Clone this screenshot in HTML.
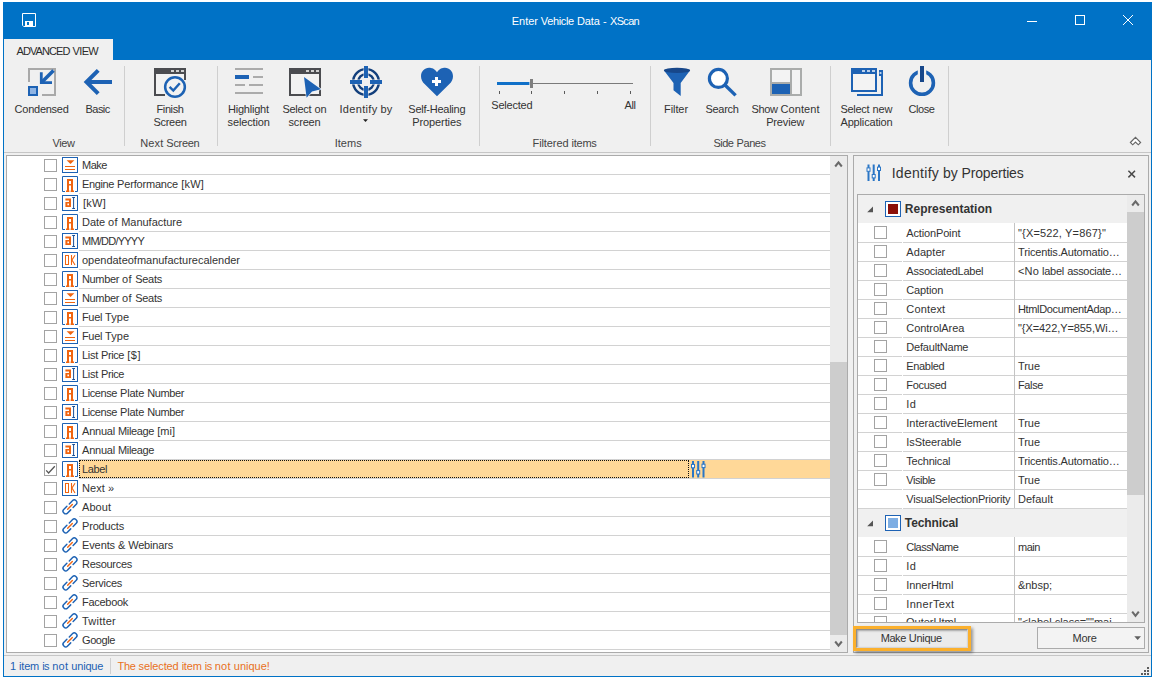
<!DOCTYPE html>
<html lang="en"><head><meta charset="utf-8"><title>Enter Vehicle Data - XScan</title>
<style>
html,body{margin:0;padding:0;background:#fff}
body{width:1154px;height:680px;overflow:hidden;position:relative;font:11px/13px "Liberation Sans",sans-serif;color:#333}
#app div,#app svg,#app span.a{position:absolute}
#app{position:absolute;left:0;top:0;width:1154px;height:680px;overflow:hidden}
.t{white-space:pre;font:11px/13px "Liberation Sans",sans-serif;color:#333;height:13px}
.t .w{display:inline-block;white-space:pre;vertical-align:baseline}
.t14{font-size:14px;line-height:16px;height:16px}
.t12b{font-size:12px;font-weight:bold;line-height:14px;height:14px}
.sec{left:0;top:0}
.wht{color:#fff}
.grp{color:#444}
.cb{box-sizing:border-box;width:13px;height:13px;border:1px solid #a3a3a3;background:#fff}
.sep{background:#d2d2d2;height:1px}
.vsep{background:#cfcfcf;width:1px}
svg{overflow:visible;display:block}
</style></head><body><div id="app">
<div class="window" style="left:3px;top:2px;width:1149px;height:675px;background:#f0f0f0;box-sizing:border-box;border:1px solid #0072c6;border-top:0"></div>
<div class="sec" id="titlebar">
<div class="titlebar" style="left:3px;top:2px;width:1149px;height:58px;background:#0072c6"></div>
<svg class="ic" style="left:22px;top:13px" width="14" height="14" viewBox="22 13 14 14"><path d="M22.5 13.5H35.5V26.5H23.7L22.5 25.3Z" fill="none" stroke="#fff" stroke-width="1"/><rect x="25" y="21" width="8" height="6" fill="#fff"/><rect x="27" y="22" width="2" height="3" fill="#0072c6"/></svg>
<div class="t wht" style="left:511.8px;top:15px"><span class="w" style="width:26px;letter-spacing:-0.059px">Enter</span> <span class="w" style="width:33px;letter-spacing:-0.355px">Vehicle</span> <span class="w" style="width:23px;letter-spacing:-0.062px">Data</span> <span class="w" style="width:4px">-</span> <span class="w" style="width:29px;letter-spacing:-0.684px">XScan</span></div>
<svg class="ic" style="left:1020px;top:10px" width="120" height="20" viewBox="1020 10 120 20"><rect x="1027" y="21" width="10" height="1" fill="#fff"/><rect x="1075.5" y="15.5" width="9" height="9" fill="none" stroke="#fff"/><path d="M1123 15L1133 25M1133 15L1123 25" stroke="#fff" stroke-width="1" fill="none"/></svg>
<div class="tab" style="left:4px;top:39px;width:109px;height:21px;background:#f0f0f0"></div>
<div class="t" style="left:16.5px;top:45px;color:#2b2b2b"><span class="w" style="width:53px;letter-spacing:-0.914px">ADVANCED</span> <span class="w" style="width:25.5px;letter-spacing:-0.656px">VIEW</span></div>
</div><div class="sec" id="ribbon">
<div class="ribbon-edge" style="left:4px;top:152px;width:1147px;height:1px;background:#c6c6c6"></div>
<div class="vsep" style="left:124px;top:66px;width:1px;height:80px;"></div>
<div class="vsep" style="left:217px;top:66px;width:1px;height:80px;"></div>
<div class="vsep" style="left:479px;top:66px;width:1px;height:80px;"></div>
<div class="vsep" style="left:650px;top:66px;width:1px;height:80px;"></div>
<div class="vsep" style="left:830px;top:66px;width:1px;height:80px;"></div>
<div class="vsep" style="left:948px;top:66px;width:1px;height:80px;"></div>
<div class="t grp" style="left:52.5px;top:137px"><span class="w" style="width:22px;letter-spacing:-0.414px">View</span></div>
<div class="t grp" style="left:140.3px;top:137px"><span class="w" style="width:23px;letter-spacing:0.094px">Next</span> <span class="w" style="width:33px;letter-spacing:-0.310px">Screen</span></div>
<div class="t grp" style="left:334.7px;top:137px"><span class="w" style="width:27px;letter-spacing:0.019px">Items</span></div>
<div class="t grp" style="left:532.5px;top:137px"><span class="w" style="width:36px;letter-spacing:-0.086px">Filtered</span> <span class="w" style="width:25px;letter-spacing:-0.256px">items</span></div>
<div class="t grp" style="left:713.5px;top:137px"><span class="w" style="width:20px;letter-spacing:-0.508px">Side</span> <span class="w" style="width:29px;letter-spacing:-0.441px">Panes</span></div>
<svg class="ic" style="left:26px;top:66px" width="32" height="32" viewBox="26 66 32 32"><path d="M29 82V69H55V95H42" fill="none" stroke="#a9a9a9" stroke-width="2"/><rect x="29" y="87" width="8" height="8" fill="#8fb4e3" stroke="#1d62b4" stroke-width="2"/><path d="M53.5 70.5L42 82" stroke="#1d62b4" stroke-width="3.6" fill="none"/><path d="M41.3 72.3V82.6H52" stroke="#1d62b4" stroke-width="2.8" fill="none"/></svg>
<div class="t" style="left:14.6px;top:103px"><span class="w" style="width:54px;letter-spacing:-0.253px">Condensed</span></div>
<svg class="ic" style="left:82px;top:66px" width="32" height="32" viewBox="82 66 32 32"><path d="M112 82H87" stroke="#1d62b4" stroke-width="4" fill="none"/><path d="M98.2 70.3L86.5 82L98.2 93.7" stroke="#1d62b4" stroke-width="4" fill="none" stroke-linejoin="miter"/></svg>
<div class="t" style="left:85.6px;top:103px"><span class="w" style="width:24px;letter-spacing:-0.581px">Basic</span></div>
<svg class="ic" style="left:152px;top:66px" width="36" height="34" viewBox="152 66 36 34"><rect x="155" y="69" width="30" height="26" fill="#f2f2f2" stroke="#4b4c50" stroke-width="2"/><rect x="154" y="68" width="32" height="6" fill="#4b4c50"/><rect x="171" y="70" width="3" height="2" fill="#d0d0d0"/><rect x="176" y="70" width="3" height="2" fill="#d0d0d0"/><rect x="181" y="70" width="3" height="2" fill="#d0d0d0"/><rect x="165" y="90" width="22" height="8" fill="#f0f0f0"/><rect x="182" y="80" width="6" height="16" fill="#f0f0f0"/><circle cx="175" cy="87" r="9.85" fill="#f2f2f2" stroke="#1d62b4" stroke-width="2.5"/><path d="M169.6 86.9L173.3 90.6L179.8 83.2" fill="none" stroke="#1d62b4" stroke-width="2.4"/></svg>
<div class="t" style="left:156.5px;top:103px"><span class="w" style="width:27px;letter-spacing:-0.391px">Finish</span></div>
<div class="t" style="left:153.5px;top:116px"><span class="w" style="width:33px;letter-spacing:-0.310px">Screen</span></div>
<svg class="ic" style="left:233px;top:66px" width="32" height="32" viewBox="233 66 32 32"><rect x="235" y="68" width="28" height="2" fill="#ababab"/><rect x="235" y="75" width="14" height="4" fill="#1d62b4"/><rect x="253" y="76" width="10" height="2" fill="#ababab"/><rect x="235" y="84" width="10" height="2" fill="#ababab"/><rect x="249" y="84" width="14" height="2" fill="#ababab"/><rect x="235" y="92" width="28" height="2" fill="#ababab"/></svg>
<div class="t" style="left:227.9px;top:103px"><span class="w" style="width:41px;letter-spacing:-0.201px">Highlight</span></div>
<div class="t" style="left:227.6px;top:116px"><span class="w" style="width:42px;letter-spacing:-0.158px">selection</span></div>
<svg class="ic" style="left:287px;top:66px" width="36" height="34" viewBox="287 66 36 34"><rect x="290" y="69" width="30" height="26" fill="#f2f2f2" stroke="#4b4c50" stroke-width="2"/><rect x="289" y="68" width="32" height="6" fill="#4b4c50"/><rect x="306" y="70" width="3" height="2" fill="#d0d0d0"/><rect x="311" y="70" width="3" height="2" fill="#d0d0d0"/><rect x="316" y="70" width="3" height="2" fill="#d0d0d0"/><path d="M304 77L321 89.2L312 91.6L306.6 97.8Z" fill="#1d62b4" stroke="#f4f4f4" stroke-width="1.2" paint-order="stroke"/></svg>
<div class="t" style="left:282.4px;top:103px"><span class="w" style="width:29px;letter-spacing:-0.263px">Select</span> <span class="w" style="width:12px;letter-spacing:-0.125px">on</span></div>
<div class="t" style="left:288.5px;top:116px"><span class="w" style="width:32px;letter-spacing:-0.172px">screen</span></div>
<svg class="ic" style="left:350px;top:66px" width="32" height="32" viewBox="350 66 32 32"><circle cx="366" cy="82" r="12.9" fill="none" stroke="#123f7c" stroke-width="2.4"/><circle cx="366" cy="82" r="7.9" fill="none" stroke="#123f7c" stroke-width="2.4"/><g fill="#1d62b4" stroke="#f0f0f0" stroke-width="0.8" paint-order="stroke"><rect x="364" y="66" width="4" height="12"/><rect x="364" y="86" width="4" height="12"/><rect x="350" y="80" width="12" height="4"/><rect x="370" y="80" width="12" height="4"/></g></svg>
<div class="t" style="left:339.5px;top:103px"><span class="w" style="width:38px;letter-spacing:0.316px">Identify</span> <span class="w" style="width:12px;letter-spacing:0.188px">by</span></div>
<svg class="ic" style="left:362px;top:118px" width="8" height="5" viewBox="362 118 8 5"><path d="M363 119.3H368L365.5 122Z" fill="#222"/></svg>
<svg class="ic" style="left:421px;top:66px" width="32" height="32" viewBox="421 66 32 32"><path d="M437 72.3C434.5 68.6 431.6 67.8 429 67.8C424.5 67.8 421 71.5 421 76.2C421 79.6 422.4 81.8 424.6 84L437 96.2L449.4 84C451.6 81.8 453 79.6 453 76.2C453 71.5 449.5 67.8 445 67.8C442.4 67.8 439.5 68.6 437 72.3Z" fill="#1d62b4"/><rect x="435" y="77" width="3" height="9" fill="#fff"/><rect x="432" y="80" width="9" height="3" fill="#fff"/></svg>
<div class="t" style="left:408.3px;top:103px"><span class="w" style="width:57px;letter-spacing:-0.243px">Self-Healing</span></div>
<div class="t" style="left:412.3px;top:116px"><span class="w" style="width:49px;letter-spacing:-0.114px">Properties</span></div>
<svg class="ic" style="left:490px;top:76px" width="150" height="20" viewBox="490 76 150 20"><rect x="497" y="82" width="32.4" height="3" fill="#1070c8"/><rect x="533" y="83" width="100" height="1" fill="#7a7a7a"/><rect x="530" y="79" width="3" height="9" fill="#7f7f7f"/><rect x="499" y="91" width="1" height="3" fill="#5a5a5a"/><rect x="531" y="91" width="1" height="3" fill="#5a5a5a"/><rect x="564" y="91" width="1" height="3" fill="#5a5a5a"/><rect x="597" y="91" width="1" height="3" fill="#5a5a5a"/><rect x="630" y="91" width="1" height="3" fill="#5a5a5a"/></svg>
<div class="t" style="left:491.3px;top:99px"><span class="w" style="width:41px;letter-spacing:-0.227px">Selected</span></div>
<div class="t" style="left:624.5px;top:99px"><span class="w" style="width:11px;letter-spacing:-0.411px">All</span></div>
<svg class="ic" style="left:662px;top:66px" width="30" height="32" viewBox="662 66 30 32"><path d="M664 70.6L673.5 83V90.2L680.7 96V83L690 70.6Z" fill="#1d62b4"/><ellipse cx="677" cy="70.4" rx="13.1" ry="2.7" fill="#17478a"/></svg>
<div class="t" style="left:664px;top:103px"><span class="w" style="width:24px;letter-spacing:-0.076px">Filter</span></div>
<svg class="ic" style="left:705px;top:66px" width="34" height="32" viewBox="705 66 34 32"><path d="M725 85L735.6 95.4" stroke="#1d62b4" stroke-width="3.4" fill="none"/><circle cx="718.4" cy="78.4" r="9" fill="#fff" stroke="#1d62b4" stroke-width="3.2"/></svg>
<div class="t" style="left:705.5px;top:103px"><span class="w" style="width:33px;letter-spacing:-0.310px">Search</span></div>
<svg class="ic" style="left:770px;top:66px" width="32" height="32" viewBox="770 66 32 32"><rect x="771" y="69" width="30" height="26" fill="#f3f3f3" stroke="#aaacab" stroke-width="2"/><rect x="771" y="82" width="20" height="2" fill="#aaacab"/><rect x="790" y="69" width="2" height="26" fill="#aaacab"/><rect x="772" y="84" width="18" height="10" fill="#1d62b4"/></svg>
<div class="t" style="left:751.5px;top:103px"><span class="w" style="width:26px;letter-spacing:-0.383px">Show</span> <span class="w" style="width:39px;letter-spacing:0.067px">Content</span></div>
<div class="t" style="left:766.2px;top:116px"><span class="w" style="width:38px;letter-spacing:-0.161px">Preview</span></div>
<svg class="ic" style="left:850px;top:66px" width="34" height="32" viewBox="850 66 34 32"><path d="M879 71H882V95H857" fill="none" stroke="#1d62b4" stroke-width="2"/><rect x="879" y="70" width="4" height="6" fill="#1d62b4"/><rect x="879.6" y="72" width="1.8" height="2" fill="#b9cfea"/><rect x="852" y="69" width="24" height="22" fill="#f3f3f3" stroke="#1d62b4" stroke-width="2"/><rect x="851" y="68" width="26" height="6" fill="#1d62b4"/><rect x="862" y="70" width="3" height="2" fill="#b9cfea"/><rect x="867" y="70" width="3" height="2" fill="#b9cfea"/><rect x="872" y="70" width="3" height="2" fill="#b9cfea"/></svg>
<div class="t" style="left:840.4px;top:103px"><span class="w" style="width:29px;letter-spacing:-0.263px">Select</span> <span class="w" style="width:20px;letter-spacing:-0.062px">new</span></div>
<div class="t" style="left:840.5px;top:116px"><span class="w" style="width:52px;letter-spacing:-0.166px">Application</span></div>
<svg class="ic" style="left:906px;top:64px" width="32" height="34" viewBox="906 64 32 34"><circle cx="922" cy="82.9" r="11.4" fill="none" stroke="#1d62b4" stroke-width="3.6"/><rect x="917.8" y="66" width="8.4" height="12" fill="#f0f0f0"/><rect x="920" y="66" width="4" height="16" fill="#17478a"/></svg>
<div class="t" style="left:908.5px;top:103px"><span class="w" style="width:26px;letter-spacing:-0.425px">Close</span></div>
<svg class="ic" style="left:1128px;top:135px" width="16" height="13" viewBox="1128 135 16 13"><path d="M1130.4 142.5L1135.5 137.4L1140.6 142.5L1138.3 144.8L1135.5 142L1132.7 144.8Z" fill="#fff" stroke="#666" stroke-width="1.15" stroke-linejoin="miter"/></svg>
</div><div class="sec" id="controls">
<div class="listpanel" style="left:6px;top:155px;width:842px;height:498px;background:#fff;box-sizing:border-box;border:1px solid #ababab"></div>
<div class="sep" style="left:79px;top:174px;width:751px;height:1px;"></div>
<div class="cb" style="left:44px;top:159px"></div>
<svg class="ic" style="left:62px;top:157px" width="16" height="16" viewBox="62 157 16 16"><rect x="62.5" y="157.5" width="15" height="15" fill="#fff" stroke="#1d62b4"/><path d="M66.6 160.2H74.4L70.5 164Z" fill="#f0640f"/><rect x="65" y="166" width="10" height="1" fill="#f0640f"/><rect x="65" y="169" width="10" height="1" fill="#f0640f"/></svg>
<div class="t" style="left:82px;top:159px"><span class="w" style="width:25px;letter-spacing:-0.477px">Make</span></div>
<div class="sep" style="left:79px;top:193px;width:751px;height:1px;"></div>
<div class="cb" style="left:44px;top:178px"></div>
<svg class="ic" style="left:62px;top:176px" width="16" height="16" viewBox="62 176 16 16"><rect x="62" y="176" width="16" height="16" fill="#fff"/><path d="M65 191.5H62.5V176.5H77.5V191.5H75" fill="none" stroke="#1d62b4"/><path d="M67 179H73V190.6H74V192H70.6V190.6H71V185.6H69V190.6H69.4V192H66V190.6H67Z M69 181V184H71V181Z" fill="#f0640f" fill-rule="evenodd"/></svg>
<div class="t" style="left:82px;top:178px"><span class="w" style="width:32px;letter-spacing:-0.378px">Engine</span> <span class="w" style="width:61px;letter-spacing:-0.180px">Performance</span> <span class="w" style="width:23px;letter-spacing:0.250px">[kW]</span></div>
<div class="sep" style="left:79px;top:212px;width:751px;height:1px;"></div>
<div class="cb" style="left:44px;top:197px"></div>
<svg class="ic" style="left:62px;top:195px" width="16" height="16" viewBox="62 195 16 16"><rect x="62.5" y="195.5" width="15" height="15" fill="#fff" stroke="#1d62b4"/><path d="M65.4 198.6H71V207H65.4V202H69V200.4H65.4Z M67.4 203.6V205.2H69V203.6Z" fill="#f0640f" fill-rule="evenodd"/><path d="M72.2 197.5H75M72.2 208.5H75M73.6 197.5V208.5" stroke="#1b4f96" stroke-width="1" fill="none"/></svg>
<div class="t" style="left:83px;top:197px"><span class="w" style="width:23px;letter-spacing:0.250px">[kW]</span></div>
<div class="sep" style="left:79px;top:231px;width:751px;height:1px;"></div>
<div class="cb" style="left:44px;top:216px"></div>
<svg class="ic" style="left:62px;top:214px" width="16" height="16" viewBox="62 214 16 16"><rect x="62" y="214" width="16" height="16" fill="#fff"/><path d="M65 229.5H62.5V214.5H77.5V229.5H75" fill="none" stroke="#1d62b4"/><path d="M67 217H73V228.6H74V230H70.6V228.6H71V223.6H69V228.6H69.4V230H66V228.6H67Z M69 219V222H71V219Z" fill="#f0640f" fill-rule="evenodd"/></svg>
<div class="t" style="left:82px;top:216px"><span class="w" style="width:23px;letter-spacing:-0.062px">Date</span> <span class="w" style="width:10px;letter-spacing:0.406px">of</span> <span class="w" style="width:61px;letter-spacing:-0.014px">Manufacture</span></div>
<div class="sep" style="left:79px;top:250px;width:751px;height:1px;"></div>
<div class="cb" style="left:44px;top:235px"></div>
<svg class="ic" style="left:62px;top:233px" width="16" height="16" viewBox="62 233 16 16"><rect x="62.5" y="233.5" width="15" height="15" fill="#fff" stroke="#1d62b4"/><path d="M65.4 236.6H71V245H65.4V240H69V238.4H65.4Z M67.4 241.6V243.2H69V241.6Z" fill="#f0640f" fill-rule="evenodd"/><path d="M72.2 235.5H75M72.2 246.5H75M73.6 235.5V246.5" stroke="#1b4f96" stroke-width="1" fill="none"/></svg>
<div class="t" style="left:82px;top:235px"><span class="w" style="width:62px;letter-spacing:-0.769px">MM/DD/YYYY</span></div>
<div class="sep" style="left:79px;top:269px;width:751px;height:1px;"></div>
<div class="cb" style="left:44px;top:254px"></div>
<svg class="ic" style="left:62px;top:252px" width="16" height="16" viewBox="62 252 16 16"><rect x="62.5" y="252.5" width="15" height="15" fill="#fff" stroke="#1d62b4"/><rect x="65.5" y="255.5" width="3" height="9" fill="none" stroke="#f0640f"/><path d="M71.5 255V265M75 255.2L72 260L75 265" fill="none" stroke="#f0640f" stroke-width="1.1"/></svg>
<div class="t" style="left:82px;top:254px"><span class="w" style="width:158px;letter-spacing:-0.014px">opendateofmanufacturecalender</span></div>
<div class="sep" style="left:79px;top:288px;width:751px;height:1px;"></div>
<div class="cb" style="left:44px;top:273px"></div>
<svg class="ic" style="left:62px;top:271px" width="16" height="16" viewBox="62 271 16 16"><rect x="62" y="271" width="16" height="16" fill="#fff"/><path d="M65 286.5H62.5V271.5H77.5V286.5H75" fill="none" stroke="#1d62b4"/><path d="M67 274H73V285.6H74V287H70.6V285.6H71V280.6H69V285.6H69.4V287H66V285.6H67Z M69 276V279H71V276Z" fill="#f0640f" fill-rule="evenodd"/></svg>
<div class="t" style="left:82px;top:273px"><span class="w" style="width:37px;letter-spacing:-0.354px">Number</span> <span class="w" style="width:10px;letter-spacing:0.406px">of</span> <span class="w" style="width:27px;letter-spacing:-0.228px">Seats</span></div>
<div class="sep" style="left:79px;top:307px;width:751px;height:1px;"></div>
<div class="cb" style="left:44px;top:292px"></div>
<svg class="ic" style="left:62px;top:290px" width="16" height="16" viewBox="62 290 16 16"><rect x="62.5" y="290.5" width="15" height="15" fill="#fff" stroke="#1d62b4"/><path d="M66.6 293.2H74.4L70.5 297Z" fill="#f0640f"/><rect x="65" y="299" width="10" height="1" fill="#f0640f"/><rect x="65" y="302" width="10" height="1" fill="#f0640f"/></svg>
<div class="t" style="left:82px;top:292px"><span class="w" style="width:37px;letter-spacing:-0.354px">Number</span> <span class="w" style="width:10px;letter-spacing:0.406px">of</span> <span class="w" style="width:27px;letter-spacing:-0.228px">Seats</span></div>
<div class="sep" style="left:79px;top:326px;width:751px;height:1px;"></div>
<div class="cb" style="left:44px;top:311px"></div>
<svg class="ic" style="left:62px;top:309px" width="16" height="16" viewBox="62 309 16 16"><rect x="62" y="309" width="16" height="16" fill="#fff"/><path d="M65 324.5H62.5V309.5H77.5V324.5H75" fill="none" stroke="#1d62b4"/><path d="M67 312H73V323.6H74V325H70.6V323.6H71V318.6H69V323.6H69.4V325H66V323.6H67Z M69 314V317H71V314Z" fill="#f0640f" fill-rule="evenodd"/></svg>
<div class="t" style="left:82px;top:311px"><span class="w" style="width:20px;letter-spacing:-0.352px">Fuel</span> <span class="w" style="width:24px;letter-spacing:0.035px">Type</span></div>
<div class="sep" style="left:79px;top:345px;width:751px;height:1px;"></div>
<div class="cb" style="left:44px;top:330px"></div>
<svg class="ic" style="left:62px;top:328px" width="16" height="16" viewBox="62 328 16 16"><rect x="62.5" y="328.5" width="15" height="15" fill="#fff" stroke="#1d62b4"/><path d="M66.6 331.2H74.4L70.5 335Z" fill="#f0640f"/><rect x="65" y="337" width="10" height="1" fill="#f0640f"/><rect x="65" y="340" width="10" height="1" fill="#f0640f"/></svg>
<div class="t" style="left:82px;top:330px"><span class="w" style="width:20px;letter-spacing:-0.352px">Fuel</span> <span class="w" style="width:24px;letter-spacing:0.035px">Type</span></div>
<div class="sep" style="left:79px;top:364px;width:751px;height:1px;"></div>
<div class="cb" style="left:44px;top:349px"></div>
<svg class="ic" style="left:62px;top:347px" width="16" height="16" viewBox="62 347 16 16"><rect x="62" y="347" width="16" height="16" fill="#fff"/><path d="M65 362.5H62.5V347.5H77.5V362.5H75" fill="none" stroke="#1d62b4"/><path d="M67 350H73V361.6H74V363H70.6V361.6H71V356.6H69V361.6H69.4V363H66V361.6H67Z M69 352V355H71V352Z" fill="#f0640f" fill-rule="evenodd"/></svg>
<div class="t" style="left:82px;top:349px"><span class="w" style="width:16px;letter-spacing:-0.281px">List</span> <span class="w" style="width:23px;letter-spacing:-0.412px">Price</span> <span class="w" style="width:14px;letter-spacing:0.589px">[$]</span></div>
<div class="sep" style="left:79px;top:383px;width:751px;height:1px;"></div>
<div class="cb" style="left:44px;top:368px"></div>
<svg class="ic" style="left:62px;top:366px" width="16" height="16" viewBox="62 366 16 16"><rect x="62.5" y="366.5" width="15" height="15" fill="#fff" stroke="#1d62b4"/><path d="M65.4 369.6H71V378H65.4V373H69V371.4H65.4Z M67.4 374.6V376.2H69V374.6Z" fill="#f0640f" fill-rule="evenodd"/><path d="M72.2 368.5H75M72.2 379.5H75M73.6 368.5V379.5" stroke="#1b4f96" stroke-width="1" fill="none"/></svg>
<div class="t" style="left:82px;top:368px"><span class="w" style="width:16px;letter-spacing:-0.281px">List</span> <span class="w" style="width:23px;letter-spacing:-0.412px">Price</span></div>
<div class="sep" style="left:79px;top:402px;width:751px;height:1px;"></div>
<div class="cb" style="left:44px;top:387px"></div>
<svg class="ic" style="left:62px;top:385px" width="16" height="16" viewBox="62 385 16 16"><rect x="62" y="385" width="16" height="16" fill="#fff"/><path d="M65 400.5H62.5V385.5H77.5V400.5H75" fill="none" stroke="#1d62b4"/><path d="M67 388H73V399.6H74V401H70.6V399.6H71V394.6H69V399.6H69.4V401H66V399.6H67Z M69 390V393H71V390Z" fill="#f0640f" fill-rule="evenodd"/></svg>
<div class="t" style="left:82px;top:387px"><span class="w" style="width:35px;letter-spacing:-0.417px">License</span> <span class="w" style="width:24px;letter-spacing:-0.216px">Plate</span> <span class="w" style="width:37px;letter-spacing:-0.354px">Number</span></div>
<div class="sep" style="left:79px;top:421px;width:751px;height:1px;"></div>
<div class="cb" style="left:44px;top:406px"></div>
<svg class="ic" style="left:62px;top:404px" width="16" height="16" viewBox="62 404 16 16"><rect x="62.5" y="404.5" width="15" height="15" fill="#fff" stroke="#1d62b4"/><path d="M65.4 407.6H71V416H65.4V411H69V409.4H65.4Z M67.4 412.6V414.2H69V412.6Z" fill="#f0640f" fill-rule="evenodd"/><path d="M72.2 406.5H75M72.2 417.5H75M73.6 406.5V417.5" stroke="#1b4f96" stroke-width="1" fill="none"/></svg>
<div class="t" style="left:82px;top:406px"><span class="w" style="width:35px;letter-spacing:-0.417px">License</span> <span class="w" style="width:24px;letter-spacing:-0.216px">Plate</span> <span class="w" style="width:37px;letter-spacing:-0.354px">Number</span></div>
<div class="sep" style="left:79px;top:440px;width:751px;height:1px;"></div>
<div class="cb" style="left:44px;top:425px"></div>
<svg class="ic" style="left:62px;top:423px" width="16" height="16" viewBox="62 423 16 16"><rect x="62" y="423" width="16" height="16" fill="#fff"/><path d="M65 438.5H62.5V423.5H77.5V438.5H75" fill="none" stroke="#1d62b4"/><path d="M67 426H73V437.6H74V439H70.6V437.6H71V432.6H69V437.6H69.4V439H66V437.6H67Z M69 428V431H71V428Z" fill="#f0640f" fill-rule="evenodd"/></svg>
<div class="t" style="left:82px;top:425px"><span class="w" style="width:33px;letter-spacing:-0.211px">Annual</span> <span class="w" style="width:36px;letter-spacing:-0.362px">Mileage</span> <span class="w" style="width:18px;letter-spacing:0.066px">[mi]</span></div>
<div class="sep" style="left:79px;top:459px;width:751px;height:1px;"></div>
<div class="cb" style="left:44px;top:444px"></div>
<svg class="ic" style="left:62px;top:442px" width="16" height="16" viewBox="62 442 16 16"><rect x="62.5" y="442.5" width="15" height="15" fill="#fff" stroke="#1d62b4"/><path d="M65.4 445.6H71V454H65.4V449H69V447.4H65.4Z M67.4 450.6V452.2H69V450.6Z" fill="#f0640f" fill-rule="evenodd"/><path d="M72.2 444.5H75M72.2 455.5H75M73.6 444.5V455.5" stroke="#1b4f96" stroke-width="1" fill="none"/></svg>
<div class="t" style="left:82px;top:444px"><span class="w" style="width:33px;letter-spacing:-0.211px">Annual</span> <span class="w" style="width:36px;letter-spacing:-0.362px">Mileage</span></div>
<div class="selrow" style="left:79px;top:460px;width:751px;height:18px;background:#ffd898"></div>
<div class="focus" style="left:79px;top:460px;width:610px;height:18px;box-sizing:border-box;border:1px dotted #111"></div>
<div class="sep" style="left:79px;top:478px;width:751px;height:1px;"></div>
<div class="cb" style="left:44px;top:463px"></div>
<svg class="ic" style="left:44px;top:463px" width="13" height="13" viewBox="44 463 13 13"><path d="M46.2 470.4L48.6 473L54.8 466.2" fill="none" stroke="#555" stroke-width="1.3"/></svg>
<svg class="ic" style="left:62px;top:461px" width="16" height="16" viewBox="62 461 16 16"><rect x="62" y="461" width="16" height="16" fill="#fff"/><path d="M65 476.5H62.5V461.5H77.5V476.5H75" fill="none" stroke="#1d62b4"/><path d="M67 464H73V475.6H74V477H70.6V475.6H71V470.6H69V475.6H69.4V477H66V475.6H67Z M69 466V469H71V466Z" fill="#f0640f" fill-rule="evenodd"/></svg>
<div class="t" style="left:82px;top:463px"><span class="w" style="width:25px;letter-spacing:-0.384px">Label</span></div>
<div class="sep" style="left:79px;top:497px;width:751px;height:1px;"></div>
<div class="cb" style="left:44px;top:482px"></div>
<svg class="ic" style="left:62px;top:480px" width="16" height="16" viewBox="62 480 16 16"><rect x="62.5" y="480.5" width="15" height="15" fill="#fff" stroke="#1d62b4"/><rect x="65.5" y="483.5" width="3" height="9" fill="none" stroke="#f0640f"/><path d="M71.5 483V493M75 483.2L72 488L75 493" fill="none" stroke="#f0640f" stroke-width="1.1"/></svg>
<div class="t" style="left:82px;top:482px"><span class="w" style="width:23px;letter-spacing:0.094px">Next</span> <span class="w" style="width:6px">»</span></div>
<div class="sep" style="left:79px;top:516px;width:751px;height:1px;"></div>
<div class="cb" style="left:44px;top:501px"></div>
<svg class="ic" style="left:62px;top:499px" width="16" height="16" viewBox="62 499 16 16"><g transform="rotate(-45 70 506.9)" fill="none" stroke-linecap="round"><path d="M71.6 504.29999999999995H76.3A2.3 2.3 0 0 1 78.6 506.59999999999997V507.2A2.3 2.3 0 0 1 76.3 509.5H71.8" stroke="#1d62b4" stroke-width="1.45"/><path d="M68.4 509.5H63.7A2.3 2.3 0 0 1 61.4 507.2V506.59999999999997A2.3 2.3 0 0 1 63.7 504.29999999999995H68.2" stroke="#1d62b4" stroke-width="1.45"/><path d="M66.7 506.9H73.3" stroke="#f0640f" stroke-width="1.4"/></g></svg>
<div class="t" style="left:82px;top:501px"><span class="w" style="width:29px;letter-spacing:0.050px">About</span></div>
<div class="sep" style="left:79px;top:535px;width:751px;height:1px;"></div>
<div class="cb" style="left:44px;top:520px"></div>
<svg class="ic" style="left:62px;top:518px" width="16" height="16" viewBox="62 518 16 16"><g transform="rotate(-45 70 525.9)" fill="none" stroke-linecap="round"><path d="M71.6 523.3H76.3A2.3 2.3 0 0 1 78.6 525.6V526.1999999999999A2.3 2.3 0 0 1 76.3 528.5H71.8" stroke="#1d62b4" stroke-width="1.45"/><path d="M68.4 528.5H63.7A2.3 2.3 0 0 1 61.4 526.1999999999999V525.6A2.3 2.3 0 0 1 63.7 523.3H68.2" stroke="#1d62b4" stroke-width="1.45"/><path d="M66.7 525.9H73.3" stroke="#f0640f" stroke-width="1.4"/></g></svg>
<div class="t" style="left:82px;top:520px"><span class="w" style="width:42px;letter-spacing:-0.178px">Products</span></div>
<div class="sep" style="left:79px;top:554px;width:751px;height:1px;"></div>
<div class="cb" style="left:44px;top:539px"></div>
<svg class="ic" style="left:62px;top:537px" width="16" height="16" viewBox="62 537 16 16"><g transform="rotate(-45 70 544.9)" fill="none" stroke-linecap="round"><path d="M71.6 542.3H76.3A2.3 2.3 0 0 1 78.6 544.6V545.1999999999999A2.3 2.3 0 0 1 76.3 547.5H71.8" stroke="#1d62b4" stroke-width="1.45"/><path d="M68.4 547.5H63.7A2.3 2.3 0 0 1 61.4 545.1999999999999V544.6A2.3 2.3 0 0 1 63.7 542.3H68.2" stroke="#1d62b4" stroke-width="1.45"/><path d="M66.7 544.9H73.3" stroke="#f0640f" stroke-width="1.4"/></g></svg>
<div class="t" style="left:82px;top:539px"><span class="w" style="width:33px;letter-spacing:-0.107px">Events</span> <span class="w" style="width:7px">&amp;</span> <span class="w" style="width:45px;letter-spacing:-0.158px">Webinars</span></div>
<div class="sep" style="left:79px;top:573px;width:751px;height:1px;"></div>
<div class="cb" style="left:44px;top:558px"></div>
<svg class="ic" style="left:62px;top:556px" width="16" height="16" viewBox="62 556 16 16"><g transform="rotate(-45 70 563.9)" fill="none" stroke-linecap="round"><path d="M71.6 561.3H76.3A2.3 2.3 0 0 1 78.6 563.6V564.1999999999999A2.3 2.3 0 0 1 76.3 566.5H71.8" stroke="#1d62b4" stroke-width="1.45"/><path d="M68.4 566.5H63.7A2.3 2.3 0 0 1 61.4 564.1999999999999V563.6A2.3 2.3 0 0 1 63.7 561.3H68.2" stroke="#1d62b4" stroke-width="1.45"/><path d="M66.7 563.9H73.3" stroke="#f0640f" stroke-width="1.4"/></g></svg>
<div class="t" style="left:82px;top:558px"><span class="w" style="width:50px;letter-spacing:-0.286px">Resources</span></div>
<div class="sep" style="left:79px;top:592px;width:751px;height:1px;"></div>
<div class="cb" style="left:44px;top:577px"></div>
<svg class="ic" style="left:62px;top:575px" width="16" height="16" viewBox="62 575 16 16"><g transform="rotate(-45 70 582.9)" fill="none" stroke-linecap="round"><path d="M71.6 580.3H76.3A2.3 2.3 0 0 1 78.6 582.6V583.1999999999999A2.3 2.3 0 0 1 76.3 585.5H71.8" stroke="#1d62b4" stroke-width="1.45"/><path d="M68.4 585.5H63.7A2.3 2.3 0 0 1 61.4 583.1999999999999V582.6A2.3 2.3 0 0 1 63.7 580.3H68.2" stroke="#1d62b4" stroke-width="1.45"/><path d="M66.7 582.9H73.3" stroke="#f0640f" stroke-width="1.4"/></g></svg>
<div class="t" style="left:82px;top:577px"><span class="w" style="width:40px;letter-spacing:-0.273px">Services</span></div>
<div class="sep" style="left:79px;top:611px;width:751px;height:1px;"></div>
<div class="cb" style="left:44px;top:596px"></div>
<svg class="ic" style="left:62px;top:594px" width="16" height="16" viewBox="62 594 16 16"><g transform="rotate(-45 70 601.9)" fill="none" stroke-linecap="round"><path d="M71.6 599.3H76.3A2.3 2.3 0 0 1 78.6 601.6V602.1999999999999A2.3 2.3 0 0 1 76.3 604.5H71.8" stroke="#1d62b4" stroke-width="1.45"/><path d="M68.4 604.5H63.7A2.3 2.3 0 0 1 61.4 602.1999999999999V601.6A2.3 2.3 0 0 1 63.7 599.3H68.2" stroke="#1d62b4" stroke-width="1.45"/><path d="M66.7 601.9H73.3" stroke="#f0640f" stroke-width="1.4"/></g></svg>
<div class="t" style="left:82px;top:596px"><span class="w" style="width:46px;letter-spacing:-0.289px">Facebook</span></div>
<div class="sep" style="left:79px;top:630px;width:751px;height:1px;"></div>
<div class="cb" style="left:44px;top:615px"></div>
<svg class="ic" style="left:62px;top:613px" width="16" height="16" viewBox="62 613 16 16"><g transform="rotate(-45 70 620.9)" fill="none" stroke-linecap="round"><path d="M71.6 618.3H76.3A2.3 2.3 0 0 1 78.6 620.6V621.1999999999999A2.3 2.3 0 0 1 76.3 623.5H71.8" stroke="#1d62b4" stroke-width="1.45"/><path d="M68.4 623.5H63.7A2.3 2.3 0 0 1 61.4 621.1999999999999V620.6A2.3 2.3 0 0 1 63.7 618.3H68.2" stroke="#1d62b4" stroke-width="1.45"/><path d="M66.7 620.9H73.3" stroke="#f0640f" stroke-width="1.4"/></g></svg>
<div class="t" style="left:82px;top:615px"><span class="w" style="width:34px;letter-spacing:0.228px">Twitter</span></div>
<div class="sep" style="left:79px;top:649px;width:751px;height:1px;"></div>
<div class="cb" style="left:44px;top:634px"></div>
<svg class="ic" style="left:62px;top:632px" width="16" height="16" viewBox="62 632 16 16"><g transform="rotate(-45 70 639.9)" fill="none" stroke-linecap="round"><path d="M71.6 637.3H76.3A2.3 2.3 0 0 1 78.6 639.6V640.1999999999999A2.3 2.3 0 0 1 76.3 642.5H71.8" stroke="#1d62b4" stroke-width="1.45"/><path d="M68.4 642.5H63.7A2.3 2.3 0 0 1 61.4 640.1999999999999V639.6A2.3 2.3 0 0 1 63.7 637.3H68.2" stroke="#1d62b4" stroke-width="1.45"/><path d="M66.7 639.9H73.3" stroke="#f0640f" stroke-width="1.4"/></g></svg>
<div class="t" style="left:82px;top:634px"><span class="w" style="width:33px;letter-spacing:-0.414px">Google</span></div>
<svg class="ic" style="left:690px;top:461px" width="16" height="17" viewBox="690 461 16 17"><rect x="692.0" y="461" width="2" height="16.5" fill="#2a76c6"/><rect x="691.5" y="464.4" width="3" height="3.4" fill="#fff" stroke="#2a76c6" stroke-width="1"/><rect x="697.2" y="461" width="2" height="16.5" fill="#2a76c6"/><rect x="696.7" y="470.6" width="3" height="3.4" fill="#fff" stroke="#2a76c6" stroke-width="1"/><rect x="702.5" y="461" width="2" height="16.5" fill="#2a76c6"/><rect x="702.0" y="464.2" width="3" height="3.4" fill="#fff" stroke="#2a76c6" stroke-width="1"/></svg>
<div class="vscroll" style="left:830px;top:156px;width:17px;height:496px;background:#ebebeb"></div>
<div class="thumb" style="left:830px;top:362px;width:17px;height:273px;background:#cdcdcd"></div>
<svg class="ic" style="left:834px;top:160px" width="9" height="8" viewBox="834 160 9 8"><path d="M835.2 166.5L838.5 162.4L841.8 166.5" fill="none" stroke="#696969" stroke-width="2.05"/></svg>
<svg class="ic" style="left:834px;top:640px" width="9" height="8" viewBox="834 640 9 8"><path d="M835.2 641.5L838.5 645.6L841.8 641.5" fill="none" stroke="#696969" stroke-width="2.05"/></svg>
</div><div class="sec" id="properties">
<div class="proppanel" style="left:853px;top:155px;width:296px;height:498px;background:#f0f0f0;box-sizing:border-box;border:1px solid #ababab"></div>
<svg class="ic" style="left:865px;top:164px" width="17" height="18" viewBox="865 164 17 18"><rect x="867.5" y="164.5" width="2" height="16.5" fill="#2a76c6"/><rect x="867.0" y="167.9" width="3" height="3.4" fill="#fff" stroke="#2a76c6" stroke-width="1"/><rect x="872.7" y="164.5" width="2" height="16.5" fill="#2a76c6"/><rect x="872.2" y="174.5" width="3" height="3.4" fill="#fff" stroke="#2a76c6" stroke-width="1"/><rect x="878" y="164.5" width="2" height="16.5" fill="#2a76c6"/><rect x="877.5" y="167.1" width="3" height="3.4" fill="#fff" stroke="#2a76c6" stroke-width="1"/></svg>
<div class="t t14" style="left:891.7px;top:165px"><span class="w" style="width:47.4px;letter-spacing:0.282px">Identify</span> <span class="w" style="width:14.7px;letter-spacing:-0.048px">by</span> <span class="w" style="width:62px;letter-spacing:-0.181px">Properties</span></div>
<svg class="ic" style="left:1127px;top:169px" width="10" height="10" viewBox="1127 169 10 10"><path d="M1128.4 170.8L1135 177.4M1135 170.8L1128.4 177.4" stroke="#4a4a4a" stroke-width="1.5" fill="none"/></svg>
<div class="grid" style="left:857px;top:194px;width:288px;height:429px;background:#fff;box-sizing:border-box;border:1px solid #ababab"></div>
<div style="left:858px;top:195px;width:269px;height:28px;background:#f0f0f0"></div>
<svg class="ic" style="left:866px;top:206px" width="8" height="7" viewBox="866 206 8 7"><path d="M873 206.6V212.2H867.2Z" fill="#555"/></svg>
<svg class="ic" style="left:885px;top:201px" width="16" height="16" viewBox="885 201 16 16"><rect x="885.5" y="201.5" width="15" height="15" fill="#fff" stroke="#1d62b4"/><rect x="888" y="204" width="10" height="10" fill="#8c0f08"/></svg>
<div class="t t12b" style="left:904.8px;top:202px"><span class="w" style="width:87.3px;letter-spacing:-0.004px">Representation</span></div>
<div class="sep" style="left:858px;top:242px;width:44px;height:1px;"></div>
<div class="sep" style="left:903px;top:242px;width:224px;height:1px;"></div>
<div style="left:1014px;top:223px;width:1px;height:19px;background:#c4c4c4"></div>
<div class="cb" style="left:874px;top:226px"></div>
<div class="t" style="left:906.3px;top:227px"><span class="w" style="width:54px;letter-spacing:-0.151px">ActionPoint</span></div>
<div class="t" style="left:1018px;top:227px"><span class="w" style="width:44px;letter-spacing:0.156px">&quot;{X=522,</span> <span class="w" style="width:41px;letter-spacing:0.185px">Y=867}&quot;</span></div>
<div class="sep" style="left:858px;top:261px;width:44px;height:1px;"></div>
<div class="sep" style="left:903px;top:261px;width:224px;height:1px;"></div>
<div style="left:1014px;top:242px;width:1px;height:19px;background:#c4c4c4"></div>
<div class="cb" style="left:874px;top:245px"></div>
<div class="t" style="left:906.3px;top:246px"><span class="w" style="width:39px;letter-spacing:0.067px">Adapter</span></div>
<div class="t" style="left:1018px;top:246px"><span class="w" style="width:101.5px;letter-spacing:-0.163px">Tricentis.Automatio…</span></div>
<div class="sep" style="left:858px;top:280px;width:44px;height:1px;"></div>
<div class="sep" style="left:903px;top:280px;width:224px;height:1px;"></div>
<div style="left:1014px;top:261px;width:1px;height:19px;background:#c4c4c4"></div>
<div class="cb" style="left:874px;top:264px"></div>
<div class="t" style="left:906.3px;top:265px"><span class="w" style="width:77px;letter-spacing:-0.249px">AssociatedLabel</span></div>
<div class="t" style="left:1018px;top:265px"><span class="w" style="width:21px;letter-spacing:0.167px">&lt;No</span> <span class="w" style="width:22px;letter-spacing:-0.250px">label</span> <span class="w" style="width:54.5px;letter-spacing:-0.298px">associate…</span></div>
<div class="sep" style="left:858px;top:299px;width:44px;height:1px;"></div>
<div class="sep" style="left:903px;top:299px;width:224px;height:1px;"></div>
<div style="left:1014px;top:280px;width:1px;height:19px;background:#c4c4c4"></div>
<div class="cb" style="left:874px;top:283px"></div>
<div class="t" style="left:906.3px;top:284px"><span class="w" style="width:37px;letter-spacing:-0.132px">Caption</span></div>
<div class="sep" style="left:858px;top:318px;width:44px;height:1px;"></div>
<div class="sep" style="left:903px;top:318px;width:224px;height:1px;"></div>
<div style="left:1014px;top:299px;width:1px;height:19px;background:#c4c4c4"></div>
<div class="cb" style="left:874px;top:302px"></div>
<div class="t" style="left:906.3px;top:303px"><span class="w" style="width:39px;letter-spacing:0.154px">Context</span></div>
<div class="t" style="left:1018px;top:303px"><span class="w" style="width:103.5px;letter-spacing:-0.349px">HtmlDocumentAdap…</span></div>
<div class="sep" style="left:858px;top:337px;width:44px;height:1px;"></div>
<div class="sep" style="left:903px;top:337px;width:224px;height:1px;"></div>
<div style="left:1014px;top:318px;width:1px;height:19px;background:#c4c4c4"></div>
<div class="cb" style="left:874px;top:321px"></div>
<div class="t" style="left:906.3px;top:322px"><span class="w" style="width:58px;letter-spacing:-0.064px">ControlArea</span></div>
<div class="t" style="left:1018px;top:322px"><span class="w" style="width:100.5px;letter-spacing:-0.074px">&quot;{X=422,Y=855,Wi…</span></div>
<div class="sep" style="left:858px;top:356px;width:44px;height:1px;"></div>
<div class="sep" style="left:903px;top:356px;width:224px;height:1px;"></div>
<div style="left:1014px;top:337px;width:1px;height:19px;background:#c4c4c4"></div>
<div class="cb" style="left:874px;top:340px"></div>
<div class="t" style="left:906.3px;top:341px"><span class="w" style="width:62px;letter-spacing:-0.200px">DefaultName</span></div>
<div class="sep" style="left:858px;top:375px;width:44px;height:1px;"></div>
<div class="sep" style="left:903px;top:375px;width:224px;height:1px;"></div>
<div style="left:1014px;top:356px;width:1px;height:19px;background:#c4c4c4"></div>
<div class="cb" style="left:874px;top:359px"></div>
<div class="t" style="left:906.3px;top:360px"><span class="w" style="width:38px;letter-spacing:-0.339px">Enabled</span></div>
<div class="t" style="left:1018px;top:360px"><span class="w" style="width:22px;letter-spacing:-0.055px">True</span></div>
<div class="sep" style="left:858px;top:394px;width:44px;height:1px;"></div>
<div class="sep" style="left:903px;top:394px;width:224px;height:1px;"></div>
<div style="left:1014px;top:375px;width:1px;height:19px;background:#c4c4c4"></div>
<div class="cb" style="left:874px;top:378px"></div>
<div class="t" style="left:906.3px;top:379px"><span class="w" style="width:40px;letter-spacing:-0.315px">Focused</span></div>
<div class="t" style="left:1018px;top:379px"><span class="w" style="width:25px;letter-spacing:-0.381px">False</span></div>
<div class="sep" style="left:858px;top:413px;width:44px;height:1px;"></div>
<div class="sep" style="left:903px;top:413px;width:224px;height:1px;"></div>
<div style="left:1014px;top:394px;width:1px;height:19px;background:#c4c4c4"></div>
<div class="cb" style="left:874px;top:397px"></div>
<div class="t" style="left:906.3px;top:398px"><span class="w" style="width:10px;letter-spacing:0.406px">Id</span></div>
<div class="sep" style="left:858px;top:432px;width:44px;height:1px;"></div>
<div class="sep" style="left:903px;top:432px;width:224px;height:1px;"></div>
<div style="left:1014px;top:413px;width:1px;height:19px;background:#c4c4c4"></div>
<div class="cb" style="left:874px;top:416px"></div>
<div class="t" style="left:906.3px;top:417px"><span class="w" style="width:91px;letter-spacing:-0.006px">InteractiveElement</span></div>
<div class="t" style="left:1018px;top:417px"><span class="w" style="width:22px;letter-spacing:-0.055px">True</span></div>
<div class="sep" style="left:858px;top:451px;width:44px;height:1px;"></div>
<div class="sep" style="left:903px;top:451px;width:224px;height:1px;"></div>
<div style="left:1014px;top:432px;width:1px;height:19px;background:#c4c4c4"></div>
<div class="cb" style="left:874px;top:435px"></div>
<div class="t" style="left:906.3px;top:436px"><span class="w" style="width:55px;letter-spacing:-0.060px">IsSteerable</span></div>
<div class="t" style="left:1018px;top:436px"><span class="w" style="width:22px;letter-spacing:-0.055px">True</span></div>
<div class="sep" style="left:858px;top:470px;width:44px;height:1px;"></div>
<div class="sep" style="left:903px;top:470px;width:224px;height:1px;"></div>
<div style="left:1014px;top:451px;width:1px;height:19px;background:#c4c4c4"></div>
<div class="cb" style="left:874px;top:454px"></div>
<div class="t" style="left:906.3px;top:455px"><span class="w" style="width:44px;letter-spacing:-0.207px">Technical</span></div>
<div class="t" style="left:1018px;top:455px"><span class="w" style="width:101.5px;letter-spacing:-0.163px">Tricentis.Automatio…</span></div>
<div class="sep" style="left:858px;top:489px;width:44px;height:1px;"></div>
<div class="sep" style="left:903px;top:489px;width:224px;height:1px;"></div>
<div style="left:1014px;top:470px;width:1px;height:19px;background:#c4c4c4"></div>
<div class="cb" style="left:874px;top:473px"></div>
<div class="t" style="left:906.3px;top:474px"><span class="w" style="width:29px;letter-spacing:-0.460px">Visible</span></div>
<div class="t" style="left:1018px;top:474px"><span class="w" style="width:22px;letter-spacing:-0.055px">True</span></div>
<div class="sep" style="left:858px;top:508px;width:44px;height:1px;"></div>
<div class="sep" style="left:903px;top:508px;width:224px;height:1px;"></div>
<div style="left:1014px;top:489px;width:1px;height:19px;background:#c4c4c4"></div>
<div class="t" style="left:906.3px;top:493px"><span class="w" style="width:104px;letter-spacing:-0.228px">VisualSelectionPriority</span></div>
<div class="t" style="left:1018px;top:493px"><span class="w" style="width:35px;letter-spacing:0.020px">Default</span></div>
<div style="left:858px;top:509px;width:269px;height:28px;background:#f0f0f0"></div>
<svg class="ic" style="left:866px;top:520px" width="8" height="7" viewBox="866 520 8 7"><path d="M873 520.6V526.2H867.2Z" fill="#555"/></svg>
<svg class="ic" style="left:885px;top:515px" width="16" height="16" viewBox="885 515 16 16"><rect x="885.5" y="515.5" width="15" height="15" fill="#fff" stroke="#1d62b4"/><rect x="888" y="518" width="10" height="10" fill="#7eaee3"/></svg>
<div class="t t12b" style="left:904.8px;top:516px"><span class="w" style="width:53.5px;letter-spacing:-0.108px">Technical</span></div>
<div class="sep" style="left:858px;top:556px;width:44px;height:1px;"></div>
<div class="sep" style="left:903px;top:556px;width:224px;height:1px;"></div>
<div style="left:1014px;top:537px;width:1px;height:19px;background:#c4c4c4"></div>
<div class="cb" style="left:874px;top:540px"></div>
<div class="t" style="left:906.3px;top:541px"><span class="w" style="width:52px;letter-spacing:-0.540px">ClassName</span></div>
<div class="t" style="left:1018px;top:541px"><span class="w" style="width:22px;letter-spacing:-0.461px">main</span></div>
<div class="sep" style="left:858px;top:575px;width:44px;height:1px;"></div>
<div class="sep" style="left:903px;top:575px;width:224px;height:1px;"></div>
<div style="left:1014px;top:556px;width:1px;height:19px;background:#c4c4c4"></div>
<div class="cb" style="left:874px;top:559px"></div>
<div class="t" style="left:906.3px;top:560px"><span class="w" style="width:10px;letter-spacing:0.406px">Id</span></div>
<div class="sep" style="left:858px;top:594px;width:44px;height:1px;"></div>
<div class="sep" style="left:903px;top:594px;width:224px;height:1px;"></div>
<div style="left:1014px;top:575px;width:1px;height:19px;background:#c4c4c4"></div>
<div class="cb" style="left:874px;top:578px"></div>
<div class="t" style="left:906.3px;top:579px"><span class="w" style="width:47px;letter-spacing:-0.076px">InnerHtml</span></div>
<div class="t" style="left:1018px;top:579px"><span class="w" style="width:34px;letter-spacing:-0.042px">&amp;nbsp;</span></div>
<div class="sep" style="left:858px;top:613px;width:44px;height:1px;"></div>
<div class="sep" style="left:903px;top:613px;width:224px;height:1px;"></div>
<div style="left:1014px;top:594px;width:1px;height:19px;background:#c4c4c4"></div>
<div class="cb" style="left:874px;top:597px"></div>
<div class="t" style="left:906.3px;top:598px"><span class="w" style="width:48px;letter-spacing:0.306px">InnerText</span></div>
<div class="cliprow" style="left:858px;top:613px;width:269px;height:9px;overflow:hidden">
<div class="cb" style="left:16px;top:3px"></div>
<div class="t" style="left:48px;top:3px"><span class="w">OuterHtml</span></div>
<div class="t" style="left:160px;top:3px"><span class="w">"&lt;label class=""mai…</span></div>
<div style="left:156px;top:0;width:1px;height:9px;background:#c4c4c4"></div>
</div>
<div class="vscroll" style="left:1127px;top:195px;width:17px;height:427px;background:#ebebeb"></div>
<div class="thumb" style="left:1127px;top:212px;width:17px;height:283px;background:#cdcdcd"></div>
<svg class="ic" style="left:1131px;top:199px" width="9" height="8" viewBox="1131 199 9 8"><path d="M1132.2 205.5L1135.5 201.4L1138.8 205.5" fill="none" stroke="#696969" stroke-width="2.05"/></svg>
<svg class="ic" style="left:1131px;top:610px" width="9" height="8" viewBox="1131 610 9 8"><path d="M1132.2 611.7L1135.5 615.8L1138.8 611.7" fill="none" stroke="#696969" stroke-width="2.05"/></svg>
<div class="hl" style="left:853px;top:626px;width:118px;height:25px;box-sizing:border-box;border:3px solid #fbb02d;box-shadow:2px 2px 3px rgba(0,0,0,.38)"></div>
<div class="btn" style="left:856px;top:629px;width:112px;height:19px;box-sizing:border-box;background:#ebebeb;border:1px solid #8e8e8e;border-right-color:#d4d4d4;border-bottom-color:#d4d4d4;box-shadow:inset 1px 1px 2px rgba(0,0,0,.3)"></div>
<div class="t" style="left:880.8px;top:632px"><span class="w" style="width:25px;letter-spacing:-0.477px">Make</span> <span class="w" style="width:33px;letter-spacing:-0.310px">Unique</span></div>
<div class="btn" style="left:1037px;top:627px;width:108px;height:22px;box-sizing:border-box;background:#f3f3f3;border:1px solid #ababab"></div>
<div class="t" style="left:1072.5px;top:632px"><span class="w" style="width:24px;letter-spacing:-0.266px">More</span></div>
<svg class="ic" style="left:1133px;top:635px" width="10" height="6" viewBox="1133 635 10 6"><path d="M1134.3 636.3H1141L1137.65 639.9Z" fill="#606060"/></svg>
</div><div class="sec" id="statusbar">
<div class="status-edge" style="left:4px;top:655px;width:1147px;height:1px;background:#c6c6c6"></div>
<div class="t" style="left:10px;top:660px;color:#1d5fb2"><span class="w" style="width:6px">1</span> <span class="w" style="width:20px;letter-spacing:-0.195px">item</span> <span class="w" style="width:7px;letter-spacing:-0.477px">is</span> <span class="w" style="width:16px;letter-spacing:0.234px">not</span> <span class="w" style="width:32px;letter-spacing:-0.174px">unique</span></div>
<div class="vsep" style="left:110px;top:658px;width:1px;height:16px;"></div>
<div class="t" style="left:117.5px;top:660px;color:#e8701c"><span class="w" style="width:18px;letter-spacing:-0.323px">The</span> <span class="w" style="width:40px;letter-spacing:-0.123px">selected</span> <span class="w" style="width:20px;letter-spacing:-0.195px">item</span> <span class="w" style="width:7px;letter-spacing:-0.477px">is</span> <span class="w" style="width:16px;letter-spacing:0.234px">not</span> <span class="w" style="width:36px;letter-spacing:-0.013px">unique!</span></div>
<svg class="ic" style="left:1140px;top:665px" width="10" height="10" viewBox="1140 665 10 10"><rect x="1147" y="667" width="2" height="2" fill="#5c5c5c"/><rect x="1147" y="670" width="2" height="2" fill="#5c5c5c"/><rect x="1144" y="670" width="2" height="2" fill="#5c5c5c"/><rect x="1147" y="673" width="2" height="2" fill="#5c5c5c"/><rect x="1144" y="673" width="2" height="2" fill="#5c5c5c"/><rect x="1141" y="673" width="2" height="2" fill="#5c5c5c"/></svg>
</div></div></body></html>
